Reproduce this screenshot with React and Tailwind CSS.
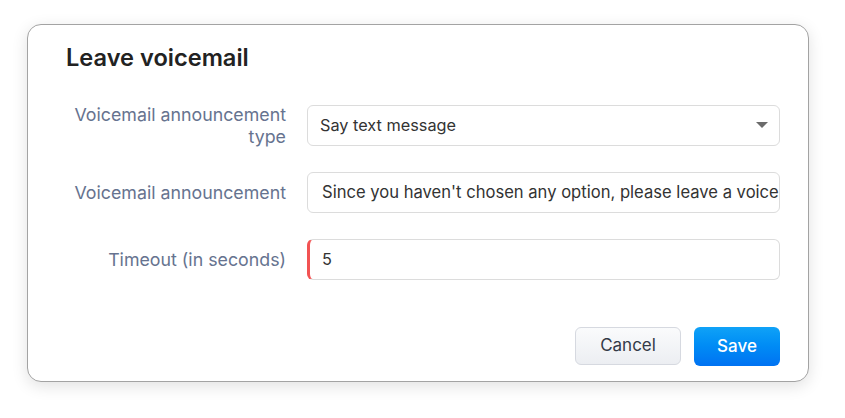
import { useState } from 'react';

const font = { fontFamily: 'Inter, "Noto Sans", sans-serif' };

const Row = ({ label, children }) => (
  <div className="flex items-center h-[41px]">
    <div className="w-[220px] shrink-0 text-right text-[17.8px] leading-[22px] text-[#66738f]">{label}</div>
    <div className="ml-[21px] flex-1 min-w-0">{children}</div>
  </div>
);

export default function App() {
  const [timeout, setTimeoutVal] = useState('5');

  return (
    <div className="min-h-screen bg-white pt-[24px] pl-[27px]" style={font}>
      <div className="w-[782px] h-[358px] rounded-[14px] border border-[#a3a3a3] bg-white shadow-[0_4px_16px_rgba(0,0,0,0.12)] pl-[38px] pr-[28px] pt-[17px] flex flex-col">
        <h1 className="text-[23.6px] leading-[32px] font-semibold text-[#222]">Leave voicemail</h1>

        <div className="mt-[31px] flex flex-col gap-[26px]">
          <Row label={<>Voicemail announcement<br />type</>}>
            <div className="h-[41px] rounded-[6px] border border-[#dcdcdc] flex items-center pl-[12px] pr-[11px]">
              <span className="flex-1 text-[16.3px] text-[#333]">Say text message</span>
              <svg width="12" height="7" viewBox="0 0 12 7"><path d="M0 0h12L6 6z" fill="#6b6b6b" /></svg>
            </div>
          </Row>

          <Row label="Voicemail announcement">
            <div className="h-[41px] rounded-[6px] border border-[#dcdcdc] flex items-center pl-[14px] overflow-hidden">
              <span className="whitespace-nowrap text-[16.6px] text-[#333]">Since you haven't chosen any option, please leave a voice message after the beep.</span>
            </div>
          </Row>

          <Row label="Timeout (in seconds)">
            <div className="h-[41px] rounded-[6px] border border-[#dcdcdc] border-l-[3px] border-l-[#f25353] flex items-center pl-[12px]">
              <input
                value={timeout}
                onChange={(e) => setTimeoutVal(e.target.value)}
                className="w-full outline-none text-[16.3px] text-[#333] bg-transparent"
              />
            </div>
          </Row>
        </div>

        <div className="mt-auto mb-[15px] flex justify-end gap-[13px]">
          <button className="w-[106px] h-[38px] rounded-[6px] border border-[#d6d9e0] bg-gradient-to-b from-[#fafbfc] to-[#eceef2] text-[17px] text-[#333a48]">Cancel</button>
          <button className="w-[86px] h-[39px] rounded-[6px] bg-gradient-to-b from-[#10a2f7] to-[#0072f2] text-[17px] font-medium text-white">Save</button>
        </div>
      </div>
    </div>
  );
}
